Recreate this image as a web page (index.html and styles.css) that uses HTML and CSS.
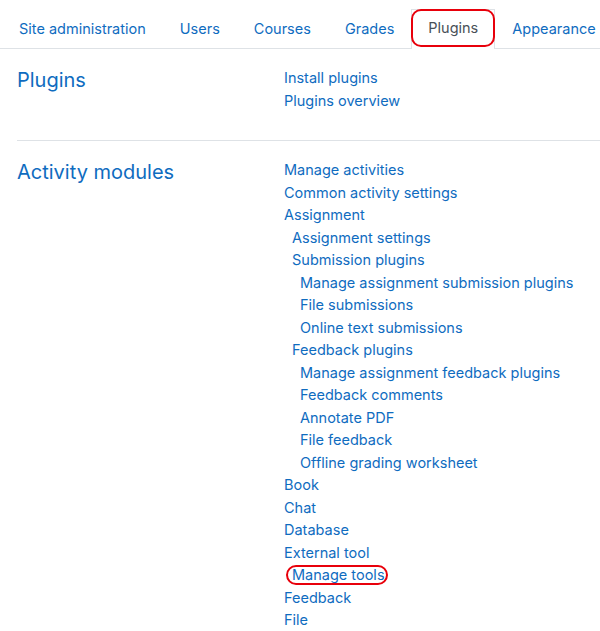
FILE: index.html
```html
<!DOCTYPE html>
<html>
<head>
<meta charset="utf-8">
<link rel="stylesheet" href="styles.css">
</head>
<body>
<nav class="tabs">
  <a class="tab">Site administration</a>
  <a class="tab">Users</a>
  <a class="tab">Courses</a>
  <a class="tab">Grades</a>
  <a class="tab active"><span class="mark mark-tab"></span>Plugins</a>
  <a class="tab">Appearance</a>
</nav>
<section class="sect">
  <h2 class="sect-title">Plugins</h2>
  <ul class="links">
    <li><a>Install plugins</a></li>
    <li><a>Plugins overview</a></li>
  </ul>
</section>
<section class="sect">
  <h2 class="sect-title">Activity modules</h2>
  <ul class="links">
    <li><a>Manage activities</a></li>
    <li><a>Common activity settings</a></li>
    <li><a>Assignment</a></li>
    <li class="l1"><a>Assignment settings</a></li>
    <li class="l1"><a>Submission plugins</a></li>
    <li class="l2"><a>Manage assignment submission plugins</a></li>
    <li class="l2"><a>File submissions</a></li>
    <li class="l2"><a>Online text submissions</a></li>
    <li class="l1"><a>Feedback plugins</a></li>
    <li class="l2"><a>Manage assignment feedback plugins</a></li>
    <li class="l2"><a>Feedback comments</a></li>
    <li class="l2"><a>Annotate PDF</a></li>
    <li class="l2"><a>File feedback</a></li>
    <li class="l2"><a>Offline grading worksheet</a></li>
    <li><a>Book</a></li>
    <li><a>Chat</a></li>
    <li><a>Database</a></li>
    <li><a>External tool</a></li>
    <li class="l1"><a class="circled"><span class="mark mark-link"></span>Manage tools</a></li>
    <li><a>Feedback</a></li>
    <li><a>File</a></li>
  </ul>
</section>
</body>
</html>
```
FILE: styles.css
```css
* { box-sizing: border-box; }
body {
  margin: 0;
  font-family: Inter, "Liberation Sans", sans-serif;
  font-size: 14.5px;
  color: #1d2125;
  background: #fff;
}
a { color: #0f6cbf; text-decoration: none; }
.tabs {
  display: flex;
  align-items: flex-end;
  height: 49px;
  border-bottom: 1px solid #dee2e6;
  padding-left: 2px;
  white-space: nowrap;
}
.tab {
  position: relative;
  display: block;
  padding: 9px 16px 11px 16px;
  line-height: 18px;
  border: 1px solid transparent;
  border-bottom: none;
  margin-bottom: -1px;
}
.tab.active {
  color: #495057;
  background: #fff;
  border-color: #dee2e6;
  height: 40px;
}
.mark {
  position: absolute;
  border: 2px solid #e8000b;
  border-radius: 10px;
  pointer-events: none;
}
.mark-tab { left: -1px; right: -1px; top: -1px; bottom: 2px; }
.sect {
  display: grid;
  grid-template-columns: 267px 1fr;
  margin-left: 17px;
  padding: 18px 0 28px;
  border-bottom: 1px solid #dee2e6;
}
.sect:last-child { border-bottom: none; }
.sect-title {
  margin: 0;
  font-weight: 400;
  font-size: 20px;
  line-height: 26px;
  color: #0f6cbf;
}
.links {
  list-style: none;
  margin: 0;
  padding: 0;
}
.links li { line-height: 22.5px; }
.links li.l1 { padding-left: 8px; }
.links li.l2 { padding-left: 16px; }
.circled { position: relative; }
.mark-link { left: -6px; right: -3px; top: -1px; bottom: -2px; border-radius: 12px; }
```
